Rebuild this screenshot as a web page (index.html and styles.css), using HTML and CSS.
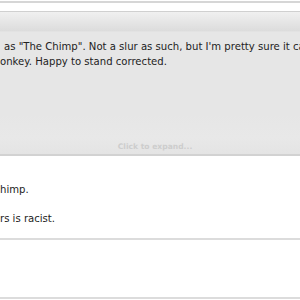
FILE: index.html
```html
<!DOCTYPE html>
<html>
<head>
<meta charset="utf-8">
<link rel="stylesheet" href="styles.css">
</head>
<body>
<div class="page">
  <div class="topband"></div>
  <div class="topgap"></div>
  <div class="quote">
    <div class="quote-head"></div>
    <div class="quote-body">
      <div class="line first">as "The Chimp". Not a slur as such, but I'm pretty sure it can</div>
      <div class="line">onkey. Happy to stand corrected.</div>
    </div>
    <div class="expand">Click to expand...</div>
  </div>
  <div class="reply">
    <div class="line">himp.</div>
    <div class="line gap">rs is racist.</div>
  </div>
  <div class="sep"></div>
  <div class="post-empty"></div>
  <div class="sep"></div>
</div>
</body>
</html>
```
FILE: styles.css
```css
html, body {
  margin: 0;
  padding: 0;
  background: #fff;
}
.page {
  width: 300px;
  height: 300px;
  overflow: hidden;
  font-family: "DejaVu Sans", Verdana, sans-serif;
  font-size: 10.1px;
  color: #222;
}
.topband {
  height: 2px;
  margin-top: 1px;
  background: #d6d6d6;
}
.topgap {
  height: 8px;
  background: #fff;
}
.quote {
  background: #e6e6e6;
  border-bottom: 2px solid #d2d2d2;
}
.quote-head {
  height: 19px;
  border-top: 1px solid #d0d0d0;
  background: linear-gradient(#f0f0f0, #dcdcdc);
  border-bottom: 1px solid #e2e2e2;
}
.quote-body {
  padding-top: 7px;
  height: 75px;
}
.line {
  white-space: nowrap;
  line-height: 15px;
}
.first {
  padding-left: 4px;
}
.expand {
  height: 40px;
  box-sizing: border-box;
  padding-top: 27px;
  text-align: center;
  padding-left: 10px;
  font-size: 7.6px;
  font-weight: bold;
  color: #cdcdcd;
  line-height: 12px;
  background: linear-gradient(#e6e6e6, #e8e8e8 60%, #e4e4e4);
}
.reply {
  padding-top: 26px;
  height: 56px;
}
.gap {
  margin-top: 14px;
}
.sep {
  height: 2px;
  background: #dcdcdc;
}
.post-empty {
  height: 57px;
}
```
